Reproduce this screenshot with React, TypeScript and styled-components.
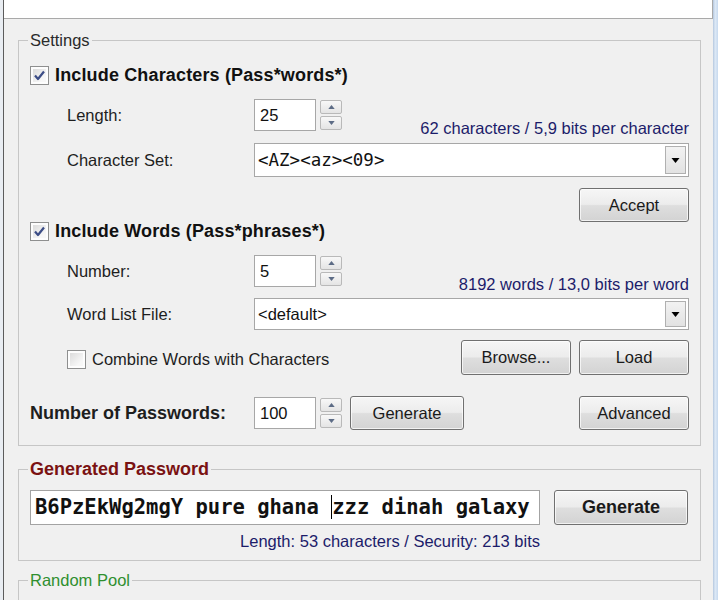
import React from "react";
import styled, { createGlobalStyle } from "styled-components";

const Global = createGlobalStyle`
  html, body { margin: 0; padding: 0; background: #f0f0f0; overflow: hidden; }
  body { font-family: "Liberation Sans", Arial, sans-serif; }
  * { box-sizing: border-box; }
`;

const Window = styled.div`
  display: flex;
  width: 718px;
  height: 600px;
  overflow: hidden;
  background: #f0f0f0;
`;

const LeftEdge = styled.div`
  width: 4px;
  flex: none;
  background: #e9edf2;
  border-right: 1px solid #5c5c5c;
`;

const RightEdge = styled.div`
  width: 5px;
  flex: none;
  background: linear-gradient(to right, #b4c7de, #dde9f6 45%, #c7d9ee);
`;

const Content = styled.div`
  flex: 1;
  min-width: 0;
  display: flex;
  flex-direction: column;
`;

const TopPanel = styled.div`
  height: 19px;
  flex: none;
  background: #ffffff;
  border-bottom: 1px solid #a9a9a9;
  border-right: 1px solid #a9a9a9;
`;

const GroupBox = styled.fieldset<{ $mt: number; $pb: number; $h?: number }>`
  margin: ${(p) => p.$mt}px 12px 0 14px;
  padding: 0 11px ${(p) => p.$pb}px 11px;
  border: 1px solid #c6c6c6;
  min-width: 0;
  flex: none;
  ${(p) => (p.$h ? `height: ${p.$h}px;` : "")}
`;

const Legend = styled.legend<{ $color: string; $bold?: boolean }>`
  padding: 0 2px;
  margin-left: -2px;
  font-size: ${(p) => (p.$bold ? 18 : 16.5)}px;
  font-weight: ${(p) => (p.$bold ? 700 : 400)};
  line-height: ${(p) => (p.$bold ? 20 : 18)}px;
  color: ${(p) => p.$color};
`;

const Row = styled.div<{ $mt: number; $h: number }>`
  display: flex;
  align-items: center;
  margin-top: ${(p) => p.$mt}px;
  height: ${(p) => p.$h}px;
`;

const LabelCell = styled.div<{ $indent?: number; $bold?: boolean }>`
  width: 224px;
  flex: none;
  padding-left: ${(p) => p.$indent ?? 0}px;
  font-size: ${(p) => (p.$bold ? 18 : 16.5)}px;
  font-weight: ${(p) => (p.$bold ? 700 : 400)};
  color: #1e1e1e;
  white-space: nowrap;
`;

const CheckLabel = styled.label<{ $indent?: number; $bold?: boolean; $dy?: number }>`
  display: flex;
  align-items: center;
  gap: 6px;
  padding-left: ${(p) => p.$indent ?? 0}px;
  margin-top: ${(p) => (p.$dy ?? 0) * 2}px;
  font-size: ${(p) => (p.$bold ? 18 : 16.5)}px;
  font-weight: ${(p) => (p.$bold ? 700 : 400)};
  letter-spacing: ${(p) => (p.$bold ? 0.15 : 0)}px;
  color: ${(p) => (p.$bold ? "#111" : "#1e1e1e")};
  white-space: nowrap;
`;

const CheckBox = styled.span`
  width: 19px;
  height: 19px;
  flex: none;
  border: 1px solid #8e8f8f;
  background: #f4f4f4;
  box-shadow: inset 0 0 0 2px #fdfdfd;
  display: flex;
  align-items: center;
  justify-content: center;
  background-image: linear-gradient(135deg, #d6d6d6, #f7f7f7 70%);
`;

const NumInput = styled.div`
  width: 62px;
  height: 32px;
  flex: none;
  background: #fff;
  border: 1px solid #a7a7a7;
  padding-left: 5px;
  display: flex;
  align-items: center;
  font-size: 16.5px;
  color: #111;
`;

const SpinCol = styled.div`
  width: 22px;
  height: 30px;
  margin-left: 4px;
  flex: none;
  display: flex;
  flex-direction: column;
  justify-content: space-between;
`;

const SpinBtn = styled.div`
  height: 14px;
  border: 1px solid #b9b9b9;
  border-radius: 2px;
  background: linear-gradient(#f8f8f8, #e4e4e4);
  display: flex;
  align-items: center;
  justify-content: center;
`;

const Hint = styled.div`
  margin-left: auto;
  align-self: flex-end;
  margin-bottom: -6px;
  line-height: 18px;
  font-size: 16.5px;
  color: #1c1c6a;
  white-space: nowrap;
`;

const Combo = styled.div`
  flex: 1;
  height: 100%;
  background: #fff;
  border: 1px solid #a7a7a7;
  display: flex;
  align-items: center;
  padding-left: 3px;
`;

const ComboText = styled.span<{ $mono?: boolean }>`
  flex: 1;
  font-family: ${(p) =>
    p.$mono ? `"DejaVu Sans Mono", monospace` : `"Liberation Sans", Arial, sans-serif`};
  font-size: ${(p) => (p.$mono ? 17.5 : 16.5)}px;
  color: #111;
  white-space: nowrap;
`;

const DropBtn = styled.div`
  width: 21px;
  height: calc(100% - 4px);
  margin-right: 2px;
  border: 1px solid #b0b0b0;
  background: linear-gradient(#f2f2f2, #e2e2e2);
  display: flex;
  align-items: center;
  justify-content: center;
`;

const Button = styled.div<{ $w: number; $h: number; $bold?: boolean; $ml?: number | "auto" }>`
  width: ${(p) => p.$w}px;
  height: ${(p) => p.$h}px;
  flex: none;
  margin-left: ${(p) => (p.$ml === "auto" ? "auto" : `${p.$ml ?? 0}px`)};
  border: 1px solid #707070;
  border-radius: 3px;
  background: linear-gradient(#f6f6f6 0%, #ececec 48%, #dedede 52%, #d3d3d3 100%);
  box-shadow: inset 0 0 0 1px rgba(255, 255, 255, 0.7);
  display: flex;
  align-items: center;
  justify-content: center;
  font-size: ${(p) => (p.$bold ? 18 : 16.5)}px;
  font-weight: ${(p) => (p.$bold ? 700 : 400)};
  color: #1a1a1a;
  white-space: nowrap;
`;

const PwdRow = styled.div`
  display: flex;
  align-items: center;
  margin-top: 10px;
  height: 36px;
`;

const PwdBox = styled.div`
  width: 510px;
  height: 35px;
  flex: none;
  background: #fff;
  border: 1px solid #a3a3a3;
  padding-left: 4px;
  display: flex;
  align-items: center;
  font-family: "DejaVu Sans Mono", monospace;
  font-weight: 700;
  font-size: 20.5px;
  color: #111;
  white-space: pre;
  overflow: hidden;
`;

const Caret = styled.span`
  display: inline-block;
  width: 0;
  height: 24px;
  border-left: 1px solid #000;
  vertical-align: middle;
`;

const PwdInfo = styled.div`
  width: 510px;
  margin-top: 7px;
  text-align: right;
  line-height: 18px;
  font-size: 16.5px;
  color: #1c1c6a;
  white-space: nowrap;
`;

const Check = () => (
  <svg width="13" height="13" viewBox="0 0 13 13">
    <path d="M2 6.5 L5 10 L11 2.5" fill="none" stroke="#3c4d86" strokeWidth="2.2" strokeLinejoin="round" />
  </svg>
);

const Arrow = ({ up, color, w = 8, h = 5 }: { up?: boolean; color: string; w?: number; h?: number }) => (
  <svg width={w} height={h} viewBox="0 0 8 5">
    <path d={up ? "M0 5 L4 0 L8 5 Z" : "M0 0 L8 0 L4 5 Z"} fill={color} />
  </svg>
);

const Spin = ({ value }: { value: string }) => (
  <>
    <NumInput>{value}</NumInput>
    <SpinCol>
      <SpinBtn>
        <Arrow up color="#5d6c86" w={7} h={4} />
      </SpinBtn>
      <SpinBtn>
        <Arrow color="#5d6c86" w={7} h={4} />
      </SpinBtn>
    </SpinCol>
  </>
);

export default function App() {
  return (
    <>
      <Global />
      <Window>
        <LeftEdge />
        <Content>
          <TopPanel />
          <GroupBox $mt={12} $pb={15}>
            <Legend $color="#2a2a2a">Settings</Legend>
            <Row $mt={15} $h={22}>
              <CheckLabel $bold>
                <CheckBox>
                  <Check />
                </CheckBox>
                Include Characters (Pass*words*)
              </CheckLabel>
            </Row>
            <Row $mt={13} $h={32}>
              <LabelCell $indent={37}>Length:</LabelCell>
              <Spin value="25" />
              <Hint>62 characters / 5,9 bits per character</Hint>
            </Row>
            <Row $mt={12} $h={34}>
              <LabelCell $indent={37}>Character Set:</LabelCell>
              <Combo>
                <ComboText $mono>&lt;AZ&gt;&lt;az&gt;&lt;09&gt;</ComboText>
                <DropBtn>
                  <Arrow color="#000" w={9} h={5} />
                </DropBtn>
              </Combo>
            </Row>
            <Row $mt={11} $h={34}>
              <Button $w={110} $h={34} $ml="auto">
                Accept
              </Button>
            </Row>
            <Row $mt={-1} $h={20}>
              <CheckLabel $bold>
                <CheckBox>
                  <Check />
                </CheckBox>
                Include Words (Pass*phrases*)
              </CheckLabel>
            </Row>
            <Row $mt={14} $h={32}>
              <LabelCell $indent={37}>Number:</LabelCell>
              <Spin value="5" />
              <Hint>8192 words / 13,0 bits per word</Hint>
            </Row>
            <Row $mt={11} $h={32}>
              <LabelCell $indent={37}>Word List File:</LabelCell>
              <Combo>
                <ComboText>&lt;default&gt;</ComboText>
                <DropBtn>
                  <Arrow color="#000" w={9} h={5} />
                </DropBtn>
              </Combo>
            </Row>
            <Row $mt={10} $h={35}>
              <CheckLabel $indent={37} $dy={2}>
                <CheckBox />
                Combine Words with Characters
              </CheckLabel>
              <Button $w={110} $h={35} $ml="auto">
                Browse...
              </Button>
              <Button $w={110} $h={35} $ml={8}>
                Load
              </Button>
            </Row>
            <Row $mt={21} $h={34}>
              <LabelCell $bold>Number of Passwords:</LabelCell>
              <Spin value="100" />
              <Button $w={114} $h={34} $ml={8}>
                Generate
              </Button>
              <Button $w={110} $h={34} $ml="auto">
                Advanced
              </Button>
            </Row>
          </GroupBox>

          <GroupBox $mt={13} $pb={10}>
            <Legend $color="#7a1212" $bold>
              Generated Password
            </Legend>
            <PwdRow>
              <PwdBox>
                B6PzEkWg2mgY pure ghana <Caret />zzz dinah galaxy
              </PwdBox>
              <Button $w={134} $h={35} $ml={14} $bold>
                Generate
              </Button>
            </PwdRow>
            <PwdInfo>Length: 53 characters / Security: 213 bits</PwdInfo>
          </GroupBox>

          <GroupBox $mt={10} $pb={10} $h={100}>
            <Legend $color="#2f8f2f">Random Pool</Legend>
          </GroupBox>
        </Content>
        <RightEdge />
      </Window>
    </>
  );
}
